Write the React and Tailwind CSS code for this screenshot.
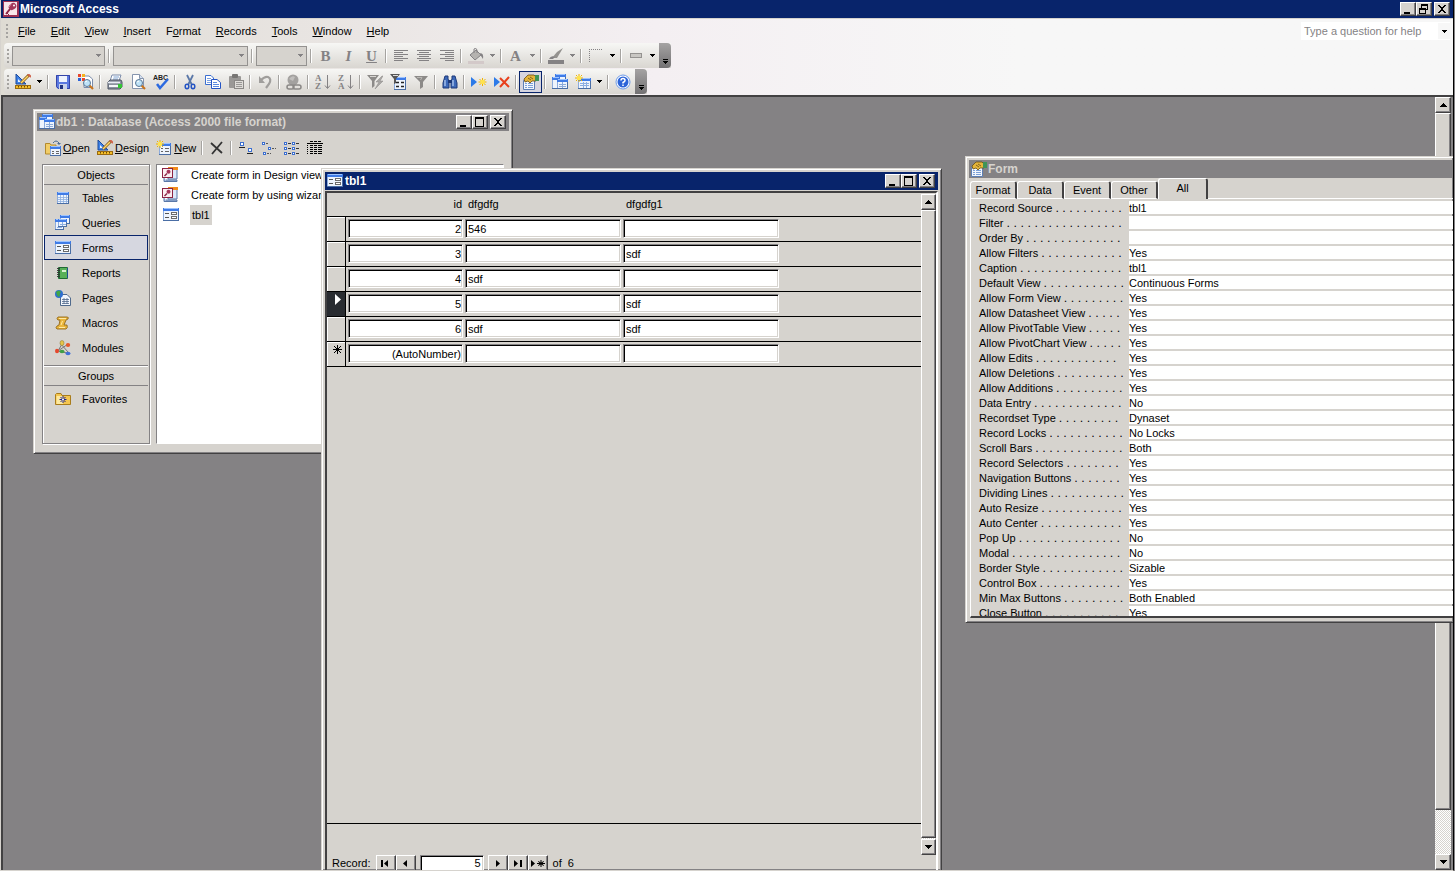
import React, { useState } from "react";
import clsx from "clsx";

const raised =
  "border border-t-white border-l-white border-r-[#424142] border-b-[#424142] shadow-[inset_-1px_-1px_0_#848284]";
const windowFrame =
  "border border-t-[#d6d3ce] border-l-[#d6d3ce] border-r-[#424142] border-b-[#424142] shadow-[inset_1px_1px_0_#fff,inset_-1px_-1px_0_#848284]";
const sunken =
  "border border-t-[#848284] border-l-[#848284] border-r-white border-b-white shadow-[inset_1px_1px_0_#000,inset_-1px_-1px_0_#d6d3ce]";
const checker =
  "bg-[conic-gradient(#fff_25%,#d6d3ce_0_50%,#fff_0_75%,#d6d3ce_0)] bg-[length:2px_2px]";

const Svg = ({ children, className = "w-4 h-4" }) => (
  <svg viewBox="0 0 16 16" className={clsx("shrink-0", className)} aria-hidden="true">
    {children}
  </svg>
);

// small sheet with a blue caption, shared by many of the object icons
const Sheet = ({ x = 1, y = 2, w = 14, h = 12 }) => (
  <g shapeRendering="crispEdges">
    <rect x={x} y={y} width={w} height={h} fill="#4a6ea5" />
    <rect x={x} y={y} width={w - 1} height={h - 1} fill="#8cabdc" />
    <rect x={x + 1} y={y + 3} width={w - 2} height={h - 4} fill="#eef4fd" />
    <rect x={x} y={y} width={w} height="3" fill="#3f7be6" />
    <rect x={x + 1} y={y} width={w - 2} height="1" fill="#9cc3ff" />
  </g>
);

const Star = ({ x = 4, y = 4 }) => (
  <g transform={`translate(${x} ${y})`}>
    <path d="M0-4V4M-4 0H4M-3-3L3 3M3-3L-3 3" stroke="#f0b400" strokeWidth="1" />
    <rect x="-2" y="-2" width="4" height="4" fill="#ffe34d" />
  </g>
);

const Lens = ({ x = 9, y = 9 }) => (
  <g transform={`translate(${x} ${y})`}>
    <path d="M2 2L6 6" stroke="#c8741c" strokeWidth="2.2" />
    <circle r="3.5" fill="#bfe3f7" stroke="#5a7896" />
    <path d="M-2-1L0-2" stroke="#fff" />
  </g>
);

const DocPage = () => (
  <g>
    <path d="M2.500 .5H9.500L13.500 4.500V14.500H2.500Z" fill="#fff" stroke="#8594ad" />
    <path d="M9.500 .5V4.500H13.500" fill="#d5e0f0" stroke="#8594ad" />
  </g>
);

const icons = {
  access: (
    <Svg>
      <rect width="16" height="16" fill="#9c3052" />
      <rect x="1" y="1" width="13" height="13" fill="#f7e6ea" />
      <path d="M3 13L7 8" stroke="#8c2445" strokeWidth="2" />
      <path d="M4 12L6 14" stroke="#8c2445" />
      <ellipse cx="9.500" cy="5.500" rx="4" ry="3.200" transform="rotate(-35 9.500 5.500)" fill="#a4375a" />
      <circle cx="11" cy="4.500" r="1" fill="#fff" />
      <path d="M6 6L8 3" stroke="#d98fa5" />
    </Svg>
  ),
  database: (
    <Svg>
      <Sheet x={3} y={0} w={11} h={9} />
      <Sheet x={0} y={3} w={8} h={12} />
      <Sheet x={5} y={5} w={11} h={10} />
      <path d="M7 10.500H14M7 12.500H14M10.500 8V14" stroke="#8cabda" />
    </Svg>
  ),
  table: (
    <Svg>
      <Sheet x={2} y={2} w={12} h={12} />
      <path d="M3 7.500H13M3 9.500H13M3 11.500H13M5.500 5V13M8.500 5V13M11.500 5V13" stroke="#8caee0" strokeWidth=".8" />
    </Svg>
  ),
  query: (
    <Svg>
      <Sheet x={5} y={0} w={10} h={9} />
      <Sheet x={0} y={4} w={9} h={11} />
      <Sheet x={3} y={4} w={9} h={8} />
      <path d="M5 9.500H11M7.500 7V11M2 12.500H7" stroke="#8caee0" />
    </Svg>
  ),
  form: (
    <Svg>
      <Sheet x={0} y={1} w={16} h={13} />
      <g shapeRendering="crispEdges">
        <path d="M2 6.500H6M2 10.500H6" stroke="#555" />
        <rect x="8.500" y="5.500" width="5" height="2" fill="#fff" stroke="#6b6b6b" />
        <rect x="8.500" y="9.500" width="5" height="2" fill="#fff" stroke="#6b6b6b" />
      </g>
    </Svg>
  ),
  report: (
    <Svg>
      <rect x="3" y="2" width="10" height="12" rx="1" fill="#1f6b32" />
      <rect x="5" y="3" width="7" height="10" fill="#58b058" />
      <rect x="7" y="5" width="4" height="2" fill="#d9f2d0" />
      <path d="M2 3.500H5M2 5.500H5M2 7.500H5M2 9.500H5M2 11.500H5" stroke="#333" strokeWidth=".9" />
      <path d="M12.500 3V13" stroke="#1b4f8f" />
    </Svg>
  ),
  page: (
    <Svg>
      <path d="M5.500 4.500H12L15.500 8V15.500H5.500Z" fill="#f2f6fc" stroke="#506a8c" />
      <path d="M7 9.500H14M7 11.500H14M7 13.500H14M9 8V14M12 8V14" stroke="#506a8c" strokeWidth=".8" />
      <circle cx="4" cy="4" r="4" fill="#2f6fd0" />
      <path d="M1 2Q4-1 6 2Q4 4 5 6Q3 8 2 5Z" fill="#42a647" />
    </Svg>
  ),
  macro: (
    <Svg>
      <path d="M3 2H12Q14 2 13 4L11 5L9 10H12Q13 13 11 14H2Q0 13 2 11L4 10L5 5H3Q1 4 3 2Z" fill="#eab63c" stroke="#94691a" strokeWidth=".9" />
      <path d="M4 3.500H11M7.500 6L6 10M4 12.500H10" stroke="#ffe9a3" />
    </Svg>
  ),
  module: (
    <Svg>
      <path d="M3 11L13 4M5 3L13 12M7 4L3 11L12 13" stroke="#777" strokeWidth="1" fill="none" />
      <ellipse cx="7" cy="3" rx="2" ry="2.500" fill="#e5c64a" stroke="#8a7420" strokeWidth=".5" />
      <ellipse cx="13" cy="5" rx="2.200" ry="2" fill="#e55a2c" />
      <ellipse cx="2" cy="11" rx="2" ry="2.300" fill="#e5482c" />
      <ellipse cx="7" cy="11.500" rx="2.500" ry="1.800" fill="#3f9f46" />
      <ellipse cx="13" cy="13.500" rx="2.500" ry="1.800" fill="#3f6fd8" />
    </Svg>
  ),
  favorites: (
    <Svg>
      <path d="M.5 3.500V13.500H15.500V4.500H7L6 2.500H1.500Z" fill="#f5c64f" stroke="#a97c1c" />
      <path d="M1.500 5H8V13H1.500Z" fill="#fde9a0" />
      <path d="M8 5V12M4.500 8.500H11.500M5.500 6L10.500 11M10.500 6L5.500 11" stroke="#20248c" />
      <circle cx="8" cy="8.500" r="1" fill="#fff" />
    </Svg>
  ),
  wizard: (
    <Svg>
      <path d="M7 2H15V12H6Z" fill="#dce8fa" stroke="#5878a8" />
      <rect x="6" y="0" width="10" height="3" fill="#f08a1c" />
      <path d="M2 11V14.500H15V13H4" fill="#a9c0e4" stroke="#5a78a8" />
      <rect x=".5" y="1.500" width="10" height="9" fill="#fbeef1" stroke="#8c2445" />
      <path d="M2.500 9L5 6.500" stroke="#8c2445" strokeWidth="1.500" />
      <circle cx="6.500" cy="4.800" r="2" fill="#a4375a" />
    </Svg>
  ),
  openDb: (
    <Svg>
      <path d="M.5 14V3.500H5L6 5H11V14Z" fill="#f2cd67" stroke="#b38a2e" />
      <path d="M8 3Q11-1 14 3" fill="none" stroke="#4a6a92" />
      <path d="M12 3H16L14 5Z" fill="#4a6a92" />
      <Sheet x={5} y={6} w={11} h={10} />
      <path d="M7 11.500H9M7 13.500H9M11 11.500H14M11 13.500H14" stroke="#666" />
    </Svg>
  ),
  design: (
    <Svg>
      <path d="M1 0V10H11Z" fill="#3e82e8" stroke="#1c4a9a" />
      <path d="M3 5V8H6Z" fill="#eaf2ff" />
      <path d="M6 9L14 1" stroke="#8a5a1c" strokeWidth="3" />
      <path d="M6 9L13 2" stroke="#ffd968" strokeWidth="1.500" />
      <path d="M13 0L16 3" stroke="#d0644c" strokeWidth="2" />
      <rect x=".5" y="11.500" width="15" height="3" fill="#f5bf28" stroke="#9a6a10" />
      <path d="M3.500 12V13.500M6.500 12V13.500M9.500 12V13.500M12.500 12V13.500" stroke="#6d4a0a" />
    </Svg>
  ),
  newObj: (
    <Svg>
      <Sheet x={3} y={3} w={12} h={12} />
      <path d="M5 8.500H7M5 11.500H7M9 8.500H13M9 11.500H13" stroke="#666" />
      <Star />
    </Svg>
  ),
  remove: (
    <Svg>
      <path d="M2 3L13 13M13 2L3 14" stroke="#333" strokeWidth="1.800" />
    </Svg>
  ),
  largeIcons: (
    <Svg>
      <g shapeRendering="crispEdges">
        <rect x="2.500" y="2.500" width="3" height="3" fill="#fff" stroke="#3c6fd0" />
        <path d="M1 7.500H7M9 13.500H15" stroke="#222" />
        <rect x="10.500" y="8.500" width="3" height="3" fill="#fff" stroke="#3c6fd0" />
      </g>
    </Svg>
  ),
  smallIcons: (
    <Svg>
      <g shapeRendering="crispEdges" fill="#fff" stroke="#3c6fd0">
        <rect x="1.500" y="2.500" width="2" height="2" />
        <rect x="7.500" y="7.500" width="2" height="2" />
        <rect x="2.500" y="12.500" width="2" height="2" />
        <path d="M5 3.500H8M11 8.500H15M6 13.500H10" stroke="#555" strokeDasharray="2 1" />
      </g>
    </Svg>
  ),
  list: (
    <Svg>
      <g shapeRendering="crispEdges" fill="#fff" stroke="#3c6fd0">
        {[2.5, 7.5, 12.5].map((y) => (
          <g key={y}>
            <rect x=".5" y={y} width="2" height="2" />
            <rect x="8.500" y={y} width="2" height="2" />
            <path d={`M4 ${y + 1}H7M12 ${y + 1}H15`} stroke="#333" />
          </g>
        ))}
      </g>
    </Svg>
  ),
  details: (
    <Svg>
      <g shapeRendering="crispEdges" stroke="#000">
        <path d="M3 1.500H15" strokeDasharray="3 1" />
        <path d="M0 3.500H16" />
        <path d="M0 5.500H16M0 7.500H16M0 9.500H16M0 11.500H16M0 13.500H16" strokeDasharray="1 2 3 1 3 1 4 1" />
      </g>
    </Svg>
  ),
  save: (
    <Svg>
      <path d="M1 1H15V15H3L1 13Z" fill="#5a78e0" />
      <path d="M1.500 1.500H14.500V14.500H3.500L1.500 12.500Z" fill="none" stroke="#3444a8" />
      <rect x="4" y="2" width="8" height="6" fill="#eef3fd" />
      <rect x="4" y="10" width="8" height="5" fill="#c9d3ea" />
      <rect x="5" y="11" width="3" height="4" fill="#20327f" />
    </Svg>
  ),
  fileSearch: (
    <Svg>
      <path d="M4 2H11L14.500 5V13.500H6V8" fill="#fff" stroke="#7b8cab" />
      <g shapeRendering="crispEdges">
        <rect x="0" y="0" width="3" height="3" fill="#e8452c" />
        <rect x="4" y="0" width="3" height="3" fill="#f7b21c" />
        <rect x="0" y="4" width="3" height="3" fill="#2c62d8" />
        <rect x="4" y="4" width="3" height="3" fill="#e8452c" />
      </g>
      <Lens x={9} y={9} />
    </Svg>
  ),
  print: (
    <Svg>
      <path d="M5 1H14L12 7H3Z" fill="#fff" stroke="#7b8cab" />
      <path d="M6.500 3H12M6 5H11" stroke="#7ba0d0" />
      <path d="M1 8L3 6H14L15 8V13L13 15H1Z" fill="#8c93a0" stroke="#4c5564" />
      <path d="M1 8.500H13" stroke="#e8edf5" strokeWidth="1.500" />
      <rect x="2" y="11" width="9" height="2" fill="#f5f7fa" />
      <rect x="11" y="10" width="4" height="4" fill="#35c435" />
    </Svg>
  ),
  preview: (
    <Svg>
      <DocPage />
      <Lens x={9} y={9} />
    </Svg>
  ),
  spell: (
    <Svg>
      <text x="0" y="6" fontSize="7" fontFamily="Liberation Sans" fontWeight="bold" fill="#222">ABC</text>
      <path d="M4 10L7 14L15 5" fill="none" stroke="#2c6ae0" strokeWidth="2.500" />
    </Svg>
  ),
  cut: (
    <Svg>
      <path d="M5 1L10 11M11 1L6 11" stroke="#5b78a8" strokeWidth="1.800" />
      <ellipse cx="5" cy="12.500" rx="1.800" ry="2.200" fill="none" stroke="#2454c4" strokeWidth="1.500" />
      <ellipse cx="11" cy="12.500" rx="1.800" ry="2.200" fill="none" stroke="#2454c4" strokeWidth="1.500" />
    </Svg>
  ),
  copy: (
    <Svg>
      <path d="M.5 1.500H6L8.500 4V10.500H.5Z" fill="#fff" stroke="#3c6fd0" />
      <path d="M2 4.500H6M2 6.500H7M2 8.500H7" stroke="#7ba0e0" />
      <path d="M6.500 5.500H12L15.500 8.500V14.500H6.500Z" fill="#fff" stroke="#2454c4" />
      <path d="M8 8.500H12M8 10.500H14M8 12.500H14" stroke="#5b8ae0" />
    </Svg>
  ),
  paste: (
    <Svg>
      <rect x="1" y="2" width="12" height="12" rx="1" fill="#9a9896" />
      <rect x="4" y="0" width="6" height="4" rx="1" fill="#777573" />
      <rect x="6.500" y="6.500" width="9" height="8" fill="#dedcd8" stroke="#8a8886" />
      <path d="M8 8.500H14M8 10.500H14M8 12.500H14" stroke="#9a9896" />
    </Svg>
  ),
  undo: (
    <Svg>
      <path d="M4 6Q8 2 11 3Q15 5 12 10L9 14" fill="none" stroke="#a09e9c" strokeWidth="2.200" />
      <path d="M2 2V9H8Z" fill="#a09e9c" />
    </Svg>
  ),
  hyperlink: (
    <Svg>
      <circle cx="7" cy="6" r="5.500" fill="#a3a19f" />
      <path d="M3 5Q6 1 9 3L7 7Z" fill="#c0bebc" />
      <rect x="1" y="11" width="7" height="4" rx="2" fill="none" stroke="#8a8886" strokeWidth="1.500" />
      <rect x="7" y="11" width="8" height="4" rx="2" fill="none" stroke="#8a8886" strokeWidth="1.500" />
    </Svg>
  ),
  sortAsc: (
    <Svg>
      <text x="0" y="7" fontSize="9" fontFamily="Liberation Serif" fontWeight="bold" fill="#848284">A</text>
      <text x="0" y="15" fontSize="9" fontFamily="Liberation Serif" fontWeight="bold" fill="#848284">Z</text>
      <path d="M12.500 1V14M10 11.500L12.500 14.500L15 11.500" fill="none" stroke="#848284" />
    </Svg>
  ),
  sortDesc: (
    <Svg>
      <text x="0" y="7" fontSize="9" fontFamily="Liberation Serif" fontWeight="bold" fill="#848284">Z</text>
      <text x="0" y="15" fontSize="9" fontFamily="Liberation Serif" fontWeight="bold" fill="#848284">A</text>
      <path d="M12.500 1V14M10 11.500L12.500 14.500L15 11.500" fill="none" stroke="#848284" />
    </Svg>
  ),
  filterSelection: (
    <Svg>
      <path d="M0 1H12L7.500 7V12L5 14V7Z" fill="#8c8a88" />
      <path d="M3 2.500H9" stroke="#d8d6d2" />
      <path d="M15 2L9 8H12L8 15L16 7H13L16 2Z" fill="#a8a6a4" stroke="#888684" strokeWidth=".5" />
    </Svg>
  ),
  filterForm: (
    <Svg>
      <Sheet x={4} y={3} w={12} h={13} />
      <path d="M6 8.500H9M6 12.500H9M11 8.500H14M11 12.500H14" stroke="#222" strokeWidth="1.500" />
      <path d="M0 0H10L6 5V9L4 10V5Z" fill="#555" />
      <path d="M3 1.500H8" stroke="#ddd" />
    </Svg>
  ),
  filter: (
    <Svg>
      <path d="M1 2H15L10 8V13L7 15V8Z" fill="#8c8a88" />
      <path d="M4 3.500H9L7.500 6" fill="none" stroke="#bab8b4" />
    </Svg>
  ),
  find: (
    <Svg>
      <path d="M3 2H6V5L7 7V14H1V9Z" fill="#3c68b8" stroke="#1c3878" />
      <path d="M10 2H13L15 9V14H9V7L10 5Z" fill="#3c68b8" stroke="#1c3878" />
      <path d="M3 6V12M11 6V12" stroke="#b9d2f5" strokeWidth="1.200" />
      <rect x="6" y="6" width="4" height="3" fill="#1c3878" />
    </Svg>
  ),
  newRecord: (
    <Svg>
      <path d="M0 3V13L6 8Z" fill="#2c7ae8" />
      <Star x={11.5} y={8} />
    </Svg>
  ),
  deleteRecord: (
    <Svg>
      <path d="M0 3V13L6 8Z" fill="#2c7ae8" />
      <path d="M6 4L15 13M15 3L6 13" stroke="#e8401c" strokeWidth="2" />
    </Svg>
  ),
  properties: (
    <Svg>
      <path d="M.5 6.500H11.500V15.500H.5Z" fill="#f2f6fc" stroke="#5d7fb5" />
      <path d="M2 9.500H4M2 11.500H4M2 13.500H4M5 9.500H10M5 11.500H10M5 13.500H10" stroke="#7ba0d8" />
      <path d="M1 5L5 1H11L13 3V7H9L7 9L5 7L2 8Z" fill="#e5b53a" stroke="#6a4c10" strokeWidth=".8" />
      <path d="M5 4L8 6M7 3L10 5" stroke="#6a4c10" strokeWidth=".8" />
      <rect x="12" y="1" width="4" height="6" fill="#3f9457" />
    </Svg>
  ),
  newObject: (
    <Svg>
      <Sheet x={3} y={4} w={13} h={11} />
      <path d="M5 9.500H14M5 11.500H14M8.500 8V14M11.500 8V14" stroke="#8caee0" />
      <Star />
    </Svg>
  ),
  help: (
    <Svg>
      <circle cx="8" cy="8" r="7" fill="#fff" stroke="#6d9be8" />
      <circle cx="8" cy="8" r="5.500" fill="#2c64d8" />
      <path d="M6 6.500Q6 4.500 8 4.500T10 6.500Q10 7.500 8 8.500V9.500M8 10.500V12" fill="none" stroke="#fff" strokeWidth="1.500" />
    </Svg>
  ),
  alignLeft: (
    <Svg>
      <path d="M1 2.500H15M1 4.500H10M1 6.500H15M1 8.500H10M1 10.500H15M1 12.500H10" stroke="#848284" shapeRendering="crispEdges" />
    </Svg>
  ),
  alignCenter: (
    <Svg>
      <path d="M1 2.500H15M3 4.500H13M1 6.500H15M3 8.500H13M1 10.500H15M3 12.500H13" stroke="#848284" shapeRendering="crispEdges" />
    </Svg>
  ),
  alignRight: (
    <Svg>
      <path d="M1 2.500H15M6 4.500H15M1 6.500H15M6 8.500H15M1 10.500H15M6 12.500H15" stroke="#848284" shapeRendering="crispEdges" />
    </Svg>
  ),
  fill: (
    <Svg>
      <path d="M2 7L8 2L13 7L7 12Z" fill="#b5b3b0" stroke="#848284" />
      <path d="M6 5V1Q8-1 9 2V5" fill="none" stroke="#848284" />
      <path d="M12 5Q16 5 15 11L13 8Z" fill="#848284" />
      <rect x="0" y="13" width="16" height="3" fill="#d3c9c9" />
    </Svg>
  ),
  lineColor: (
    <Svg>
      <path d="M15 0L9 10H4L9 4Z" fill="#94928f" />
      <path d="M1 11Q3 7 7 9L5 11Z" fill="#848284" />
      <rect x="0" y="12" width="16" height="4" fill="#848284" />
    </Svg>
  ),
  border: (
    <Svg>
      <path d="M1 1.500H15M1.500 1V15" stroke="#848284" strokeDasharray="1 1" shapeRendering="crispEdges" />
    </Svg>
  ),
  effect: (
    <Svg>
      <rect x="2.500" y="5.500" width="11" height="4" fill="#c9c7c3" stroke="#949290" />
    </Svg>
  ),
};

const glyphs = {
  minimize: <path d="M3 9H9V11H3Z" />,
  maximize: <path fillRule="evenodd" d="M2 1H11V11H2ZM3 3V10H10V3Z" />,
  restore: <path fillRule="evenodd" d="M4 1H11V7H9V11H2V5H4ZM5 3V5H9V6H10V3ZM3 7V10H8V7Z" />,
  close: <path d="M3 2H5V3H6V4H8V3H9V2H11V3H10V4H9V5H8V7H9V8H10V9H11V10H9V9H8V8H6V9H5V10H3V9H4V8H5V7H6V5H5V4H4V3H3Z" />,
};

const CaptionButton = ({ kind }) => (
  <button aria-label={kind} className={clsx("w-4 h-[14px] bg-[#d6d3ce] flex items-center", raised)}>
    <svg viewBox="0 0 14 12" className="w-[14px] h-3 shrink-0" shapeRendering="crispEdges" aria-hidden="true">
      {glyphs[kind]}
    </svg>
  </button>
);

const CaptionButtons = ({ middle = "maximize" }) => (
  <div className="ml-auto flex items-center pr-[3px]">
    <CaptionButton kind="minimize" />
    <CaptionButton kind={middle} />
    <span className="w-[2px]" />
    <CaptionButton kind="close" />
  </div>
);

const Arrow = ({ gray }) => (
  <svg viewBox="0 0 5 3" className={clsx("w-[5px] h-[3px]", gray ? "fill-[#848284]" : "fill-black")} shapeRendering="crispEdges" aria-hidden="true">
    <path d="M0 0H5V1H4V2H3V3H2V2H1V1H0Z" />
  </svg>
);

const Sep = () => (
  <span className="w-[6px] h-[14px] flex justify-center shrink-0">
    <span className="w-px bg-[#a5a3a0]" />
    <span className="w-px bg-white" />
  </span>
);

const Grip = () => (
  <span className="w-[7px] pl-[3px] flex flex-col gap-[2px] shrink-0">
    {[0, 1, 2, 3].map((i) => (
      <span key={i} className="size-[2px] bg-[#a5a3a0]" />
    ))}
  </span>
);

const MenuArrow = ({ name, gray }) => (
  <button aria-label={`${name} options`} className="w-[11px] h-[22px] flex items-center justify-center shrink-0">
    <Arrow gray={gray} />
  </button>
);

const ToolButton = ({ name, active, arrow, gray }) => (
  <>
    <button
      aria-label={name}
      className={clsx(
        "w-[23px] h-[22px] flex items-center justify-center shrink-0",
        active && "border border-[#08246b] bg-[#d6d5df]"
      )}
    >
      {icons[name]}
    </button>
    {arrow && <MenuArrow name={name} gray={gray} />}
  </>
);

const TextButton = ({ children, label, className }) => (
  <button
    aria-label={label}
    className={clsx("w-[23px] h-[22px] text-[15px] leading-4 font-bold text-[#848284] font-['Liberation_Serif',serif] shrink-0", className)}
  >
    {children}
  </button>
);

const DisabledCombo = ({ label, className }) => (
  <span className={clsx("relative mx-px shrink-0", className)}>
    <select aria-label={label} disabled className="appearance-none block w-full h-5 border border-[#949290] bg-[#d6d3ce]" />
    <span className="absolute right-1 top-2">
      <Arrow gray />
    </span>
  </span>
);

const ToolbarEnd = () => (
  <button aria-label="Toolbar options" className="w-3 h-[25px] bg-linear-to-b from-[#a5a3a3] to-[#737173] rounded-r-sm flex flex-col items-center justify-end gap-px pb-1 ml-px shrink-0">
    <span className="w-[5px] h-px bg-black" />
    <Arrow />
  </button>
);

const toolbarClass =
  "flex items-center self-start h-[25px] rounded-l-sm bg-linear-to-b from-[#f7f7f5] to-[#d9d6d1]";

const FormattingToolbar = () => (
  <div className={toolbarClass}>
    <Grip />
    <DisabledCombo label="Object" className="w-[93px]" />
    <Sep />
    <DisabledCombo label="Font" className="w-[135px]" />
    <Sep />
    <DisabledCombo label="Font size" className="w-[51px]" />
    <Sep />
    <TextButton label="Bold">B</TextButton>
    <TextButton label="Italic" className="italic">I</TextButton>
    <TextButton label="Underline" className="underline">U</TextButton>
    <Sep />
    <ToolButton name="alignLeft" />
    <ToolButton name="alignCenter" />
    <ToolButton name="alignRight" />
    <Sep />
    <ToolButton name="fill" arrow gray />
    <Sep />
    <TextButton label="Font color">A</TextButton>
    <MenuArrow name="fontColor" gray />
    <Sep />
    <ToolButton name="lineColor" arrow gray />
    <Sep />
    <ToolButton name="border" arrow />
    <Sep />
    <ToolButton name="effect" arrow />
    <ToolbarEnd />
  </div>
);

const FormToolbar = () => (
  <div className={toolbarClass}>
    <Grip />
    <ToolButton name="design" arrow />
    <Sep />
    <ToolButton name="save" />
    <ToolButton name="fileSearch" />
    <Sep />
    <ToolButton name="print" />
    <ToolButton name="preview" />
    <ToolButton name="spell" />
    <Sep />
    <ToolButton name="cut" />
    <ToolButton name="copy" />
    <ToolButton name="paste" />
    <Sep />
    <ToolButton name="undo" />
    <Sep />
    <ToolButton name="hyperlink" />
    <Sep />
    <ToolButton name="sortAsc" />
    <ToolButton name="sortDesc" />
    <Sep />
    <ToolButton name="filterSelection" />
    <ToolButton name="filterForm" />
    <ToolButton name="filter" />
    <Sep />
    <ToolButton name="find" />
    <Sep />
    <ToolButton name="newRecord" />
    <ToolButton name="deleteRecord" />
    <Sep />
    <ToolButton name="properties" active />
    <Sep />
    <ToolButton name="database" />
    <ToolButton name="newObject" arrow />
    <Sep />
    <ToolButton name="help" />
    <ToolbarEnd />
  </div>
);

// [before, underlined key, after]
const menus = [
  ["", "F", "ile"],
  ["", "E", "dit"],
  ["", "V", "iew"],
  ["", "I", "nsert"],
  ["F", "o", "rmat"],
  ["", "R", "ecords"],
  ["", "T", "ools"],
  ["", "W", "indow"],
  ["", "H", "elp"],
];

const MenuBar = () => (
  <div className="flex items-center h-6 pl-[2px]">
    <Grip />
    {menus.map(([before, key, after]) => (
      <button key={key + after} className="pl-2 pr-[7px] whitespace-nowrap">
        {before}
        <u>{key}</u>
        {after}
      </button>
    ))}
    <div className="ml-auto mr-[3px] w-[149px] h-[18px] bg-white flex items-center">
      <input
        aria-label="Type a question for help"
        placeholder="Type a question for help"
        className="flex-1 min-w-0 pl-[3px] bg-transparent outline-none placeholder:text-[#848284]"
      />
      <button aria-label="Help options" className="w-3 h-4 bg-[#f7f7f7] flex items-center justify-center">
        <Arrow />
      </button>
    </div>
  </div>
);

const ScrollArrow = ({ up }) => (
  <button aria-label={up ? "Scroll up" : "Scroll down"} className={clsx("w-full h-4 bg-[#d6d3ce] flex items-center justify-center shrink-0", raised)}>
    <svg viewBox="0 0 7 4" className="w-[7px] h-1" shapeRendering="crispEdges" aria-hidden="true">
      <path d={up ? "M3 0H4V1H5V2H6V3H7V4H0V3H1V2H2V1H3Z" : "M0 0H7V1H6V2H5V3H4V4H3V3H2V2H1V1H0Z"} />
    </svg>
  </button>
);

const ScrollBar = ({ className, trackClass }) => (
  <div className={clsx("flex flex-col", checker, className)}>
    <ScrollArrow up />
    <div className={clsx("flex-1 bg-[#d6d3ce]", raised)} />
    <div className={trackClass} />
    <ScrollArrow />
  </div>
);

const objects = [
  ["Tables", "table"],
  ["Queries", "query"],
  ["Forms", "form"],
  ["Reports", "report"],
  ["Pages", "page"],
  ["Macros", "macro"],
  ["Modules", "module"],
];

const SideItem = ({ name, icon, active, onClick }) => (
  <button
    onClick={onClick}
    className={clsx(
      "w-full h-[25px] border pl-[10px] flex items-center gap-[11px]",
      active ? "border-[#08246b] bg-[#d6d7e0]" : "border-transparent"
    )}
  >
    {icons[icon]}
    {name}
  </button>
);

const DatabaseWindow = () => {
  const [selected, setSelected] = useState("Forms");

  return (
    <section className={clsx("absolute left-[30px] top-3 w-[480px] h-[345px] bg-[#d6d3ce] p-[3px] flex flex-col", windowFrame)}>
      <div className="h-[18px] bg-[#848284] text-[#d6d3ce] text-[12px] font-bold flex items-center pl-[2px] gap-px shrink-0">
        {icons.database}
        <h2 className="whitespace-nowrap">db1 : Database (Access 2000 file format)</h2>
        <CaptionButtons />
      </div>

      <div className="h-[33px] flex items-center pl-2 shrink-0">
        <button className="flex items-center gap-[2px] mr-[7px]">
          {icons.openDb}
          <span><u>O</u>pen</span>
        </button>
        <button className="flex items-center gap-[2px] mr-[7px]">
          {icons.design}
          <span><u>D</u>esign</span>
        </button>
        <button className="flex items-center gap-[2px] mr-[3px]">
          {icons.newObj}
          <span><u>N</u>ew</span>
        </button>
        <Sep />
        <ToolButton name="remove" />
        <Sep />
        <ToolButton name="largeIcons" />
        <ToolButton name="smallIcons" />
        <ToolButton name="list" />
        <ToolButton name="details" />
      </div>

      <div className="flex flex-1 gap-[6px] px-[5px] pb-[6px] min-h-0">
        <nav className="w-[108px] border border-[#848284] shadow-[inset_1px_1px_0_#fff,1px_1px_0_#fff] px-px shrink-0">
          <h3 className="h-5 border-b border-[#848284] flex items-center justify-center">Objects</h3>
          {objects.map(([name, icon]) => (
            <SideItem key={name} name={name} icon={icon} active={selected === name} onClick={() => setSelected(name)} />
          ))}
          <h3 className="h-[21px] mt-[5px] border-y border-[#848284] shadow-[inset_0_1px_0_#fff] flex items-center justify-center">Groups</h3>
          <SideItem name="Favorites" icon="favorites" />
        </nav>
        <ul className="flex-1 bg-white border border-[#848284] border-r-white border-b-white">
          {["Create form in Design view", "Create form by using wizard"].map((text) => (
            <li key={text} className="h-5 flex items-center pl-[5px] gap-[13px]">
              {icons.wizard}
              <span>{text}</span>
            </li>
          ))}
          <li className="h-5 flex items-center pl-[6px] gap-[11px]">
            {icons.form}
            <span className="h-5 px-[2px] bg-[#d6d3ce] flex items-center">tbl1</span>
          </li>
        </ul>
      </div>
    </section>
  );
};

const records = [
  { id: "2", dfgdfg: "546", dfgdfg1: "" },
  { id: "3", dfgdfg: "", dfgdfg1: "sdf" },
  { id: "4", dfgdfg: "sdf", dfgdfg1: "" },
  { id: "5", dfgdfg: "", dfgdfg1: "sdf", current: true },
  { id: "6", dfgdfg: "sdf", dfgdfg1: "sdf" },
  { id: "(AutoNumber)", dfgdfg: "", dfgdfg1: "", isNew: true },
];

const Field = ({ label, value, className }) => (
  <input
    aria-label={label}
    defaultValue={value}
    className={clsx("block h-[19px] mt-[2px] bg-white outline-none", sunken, className)}
  />
);

const NavButton = ({ label, d }) => (
  <button aria-label={label} className={clsx("w-5 h-4 bg-[#d6d3ce] flex items-center justify-center", raised)}>
    <svg viewBox="0 0 14 9" className="w-[14px] h-[9px]" aria-hidden="true">
      <path d={d} />
    </svg>
  </button>
);

const burst = "M9.500 1H10.500V3.500L12.500 2L13 2.500L11.500 4H14V5H11.500L13 6.500L12.500 7L10.500 5.500V8H9.500V5.500L7.500 7L7 6.500L8.500 5H6V4H8.500L7 2.500L7.500 2L9.500 3.500Z";

const FormWindow = () => (
  <section className={clsx("absolute left-[318px] top-[71px] bottom-0 w-[621px] bg-[#d6d3ce] pt-[3px] px-[3px] flex flex-col border-b-0", windowFrame)}>
    <div className="h-[18px] bg-[#08246b] text-white text-[12px] font-bold flex items-center pl-[2px] gap-[2px] shrink-0">
      {icons.form}
      <h2>tbl1</h2>
      <CaptionButtons />
    </div>

    <div className="flex-1 min-h-0 mt-px flex flex-col border-2 border-b-0 border-t-[#424142] border-l-[#424142] border-r-white">
      <div className="flex flex-1 min-h-0">
        <div className="flex-1 flex flex-col">
          <table className="w-full table-fixed border-separate border-spacing-0">
            <colgroup>
              <col className="w-[19px]" />
              <col className="w-[119px]" />
              <col className="w-[158px]" />
              <col className="w-[158px]" />
              <col />
            </colgroup>
            <thead>
              <tr className="h-6 *:border-b *:border-black *:p-0 *:pb-px *:font-normal">
                <td />
                <th className="text-right"><span className="pr-[3px]">id</span></th>
                <th className="text-left"><span className="pl-[3px]">dfgdfg</span></th>
                <th className="text-left"><span className="pl-[3px]">dfgdfg1</span></th>
                <td />
              </tr>
            </thead>
            <tbody>
              {records.map((row) => (
                <tr key={row.id} className="h-[25px] *:border-b *:border-black *:p-0 *:align-top">
                  <td className={clsx("border-r", row.current ? "bg-[#292c31]" : "shadow-[inset_1px_1px_0_#fff]")}>
                    <svg viewBox="0 0 18 18" className="block w-[18px] h-[18px]" aria-hidden="true">
                      {row.current && <path d="M8 2V13L14 7.500Z" fill="#fff" />}
                      {row.isNew && <path d="M10.500 3V12M6 7.500H15M7 4L14 11M14 4L7 11" stroke="#000" />}
                    </svg>
                  </td>
                  <td><Field label="id" value={row.id} className="ml-[2px] w-[115px] pl-[2px] pr-px text-right" /></td>
                  <td><Field label="dfgdfg" value={row.dfgdfg} className="w-[156px] px-[2px]" /></td>
                  <td><Field label="dfgdfg1" value={row.dfgdfg1} className="w-[156px] px-[2px]" /></td>
                  <td />
                </tr>
              ))}
            </tbody>
          </table>
          <div className="mt-auto h-8 border-t border-black" />
        </div>
        <ScrollBar className="w-[15px] mt-px" trackClass="h-px" />
      </div>

      <div className="h-[15px] overflow-hidden flex items-start pl-[5px] shrink-0">
        <label htmlFor="record" className="leading-4 mr-[5px]">Record:</label>
        <NavButton label="First" d="M2 1H4V8H2ZM5 4.500L9 1V8Z" />
        <NavButton label="Previous" d="M4 4.500L8 1V8Z" />
        <input id="record" defaultValue="5" className={clsx("mx-1 w-16 h-5 pb-1 px-[2px] bg-white text-right outline-none", sunken)} />
        <NavButton label="Next" d="M5 1L9 4.500L5 8Z" />
        <NavButton label="Last" d="M3 1L7 4.500L3 8ZM9 1H11V8H9Z" />
        <NavButton label="New" d={`M0 1L4 4.500L0 8Z${burst}`} />
        <span className="leading-4 ml-[5px]">of&nbsp; 6</span>
      </div>
    </div>
  </section>
);

// name, number of leader dots, value
const properties = [
  ["Record Source", 10, "tbl1"],
  ["Filter", 17, ""],
  ["Order By", 14, ""],
  ["Allow Filters", 12, "Yes"],
  ["Caption", 15, "tbl1"],
  ["Default View", 12, "Continuous Forms"],
  ["Allow Form View", 9, "Yes"],
  ["Allow Datasheet View", 5, "Yes"],
  ["Allow PivotTable View", 5, "Yes"],
  ["Allow PivotChart View", 5, "Yes"],
  ["Allow Edits", 12, "Yes"],
  ["Allow Deletions", 10, "Yes"],
  ["Allow Additions", 10, "Yes"],
  ["Data Entry", 13, "No"],
  ["Recordset Type", 9, "Dynaset"],
  ["Record Locks", 11, "No Locks"],
  ["Scroll Bars", 13, "Both"],
  ["Record Selectors", 8, "Yes"],
  ["Navigation Buttons", 7, "Yes"],
  ["Dividing Lines", 11, "Yes"],
  ["Auto Resize", 12, "Yes"],
  ["Auto Center", 12, "Yes"],
  ["Pop Up", 15, "No"],
  ["Modal", 16, "No"],
  ["Border Style", 12, "Sizable"],
  ["Control Box", 12, "Yes"],
  ["Min Max Buttons", 9, "Both Enabled"],
  ["Close Button", 11, "Yes"],
];

const PropertiesWindow = () => {
  const [tab, setTab] = useState("All");

  return (
    <section className={clsx("absolute left-[962px] top-[59px] right-0 h-[467px] bg-[#d6d3ce] pl-[3px] py-[3px] flex flex-col border-r-0", windowFrame)}>
      <div className="h-[18px] bg-[#848284] text-[#d6d3ce] text-[12px] font-bold flex items-center pl-[2px] gap-px shrink-0">
        {icons.properties}
        <h2>Form</h2>
      </div>

      <div className="flex items-end h-[21px] pl-px shrink-0">
        {["Format", "Data", "Event", "Other", "All"].map((name) => (
          <button
            key={name}
            onClick={() => setTab(name)}
            className={clsx(
              "border-t border-l border-white rounded-t-[3px] border-r-2 border-r-[#424142]",
              tab === name ? "w-[50px] h-[21px] pb-[2px]" : "w-[47px] h-[18px] border-b border-b-white"
            )}
          >
            {name}
          </button>
        ))}
        <span className="flex-1 border-b border-white" />
      </div>

      <div className="flex-1 min-h-0 overflow-hidden border-l border-white border-b-2 border-b-[#424142] pt-[2px] ml-px mb-px">
        {properties.map(([name, dots, value]) => (
          <div key={name} className="flex h-[15px]">
            <label htmlFor={name} className="w-[158px] pl-2 flex gap-[3px] leading-[15px] whitespace-nowrap shrink-0">
              {name}
              <span aria-hidden="true" className="font-['DejaVu_Sans',sans-serif]">
                {Array(dots).fill(".").join(" ")}
              </span>
            </label>
            <input id={name} defaultValue={value} className="flex-1 min-w-0 h-[13px] bg-white outline-none" />
          </div>
        ))}
      </div>
    </section>
  );
};

const App = () => {
  return (
    <div className="h-screen overflow-hidden pr-px bg-[#848284] text-[11px] leading-[14px] text-black font-['Liberation_Sans',Arial,sans-serif] cursor-default">
      <div className="h-full flex flex-col border-l border-b border-l-[#d6d3ce] border-b-[#d6d3ce] border-r border-r-black bg-linear-to-r from-[#dedbd3] via-[#f4eff2] via-45% to-[#f7f7f7] to-70%">
        <header className="shrink-0 flex flex-col">
          <div className="h-[18px] bg-[#08246b] text-white text-[12px] font-bold flex items-center pl-[2px] gap-px">
            {icons.access}
            <h1>Microsoft Access</h1>
            <CaptionButtons middle="restore" />
          </div>
          <div className="h-px bg-[#d6d3ce]" />
          <MenuBar />
          <div className="flex flex-col gap-px pl-[3px] pb-px">
            <FormattingToolbar />
            <FormToolbar />
          </div>
        </header>

        <main className="relative flex-1 min-h-0 overflow-hidden flex justify-end bg-[#848284] border-t-2 border-l-2 border-[#424142]">
          <ScrollBar className="w-4 mr-[2px]" trackClass="h-11" />
          <DatabaseWindow />
          <FormWindow />
          <PropertiesWindow />
        </main>
      </div>
    </div>
  );
};

export default App;
